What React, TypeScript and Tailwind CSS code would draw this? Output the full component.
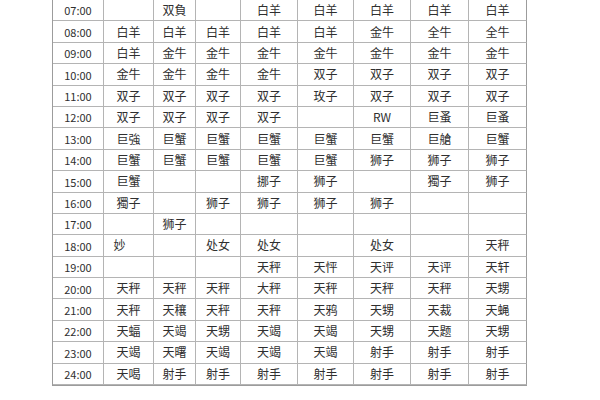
type Row = {
  time: string;
  cells: string[];
};

const rows: Row[] = [
  { time: '07:00', cells: ['', '双負', '', '白羊', '白羊', '白羊', '白羊', '白羊'] },
  { time: '08:00', cells: ['白羊', '白羊', '白羊', '白羊', '白羊', '金牛', '全牛', '全牛'] },
  { time: '09:00', cells: ['白羊', '金牛', '金牛', '金牛', '金牛', '金牛', '金牛', '金牛'] },
  { time: '10:00', cells: ['金牛', '金牛', '金牛', '金牛', '双子', '双子', '双子', '双子'] },
  { time: '11:00', cells: ['双子', '双子', '双子', '双子', '玫子', '双子', '双子', '双子'] },
  { time: '12:00', cells: ['双子', '双子', '双子', '双子', '', 'RW', '巨蚤', '巨蚤'] },
  { time: '13:00', cells: ['巨強', '巨蟹', '巨蟹', '巨蟹', '巨蟹', '巨蟹', '巨艙', '巨蟹'] },
  { time: '14:00', cells: ['巨蟹', '巨蟹', '巨蟹', '巨蟹', '巨蟹', '狮子', '狮子', '狮子'] },
  { time: '15:00', cells: ['巨蟹', '', '', '挪子', '狮子', '', '獨子', '狮子'] },
  { time: '16:00', cells: ['獨子', '', '狮子', '狮子', '狮子', '狮子', '', ''] },
  { time: '17:00', cells: ['', '狮子', '', '', '', '', '', ''] },
  { time: '18:00', cells: ['妙', '', '处女', '处女', '', '处女', '', '天秤'] },
  { time: '19:00', cells: ['', '', '', '天秤', '天怦', '天评', '天评', '天轩'] },
  { time: '20:00', cells: ['天秤', '天秤', '天秤', '大秤', '天秤', '天秤', '天秤', '天甥'] },
  { time: '21:00', cells: ['天秤', '天穰', '天秤', '天秤', '天鸦', '天甥', '天裁', '天蝇'] },
  { time: '22:00', cells: ['天蝠', '天竭', '天甥', '天竭', '天竭', '天甥', '天题', '天甥'] },
  { time: '23:00', cells: ['天竭', '天曙', '天竭', '天竭', '天竭', '射手', '射手', '射手'] },
  { time: '24:00', cells: ['天喝', '射手', '射手', '射手', '射手', '射手', '射手', '射手'] },
];

const App: React.FC = () => {
  return (
    <div className="w-[600px] h-[400px] bg-white overflow-hidden pl-[52px] text-[#2f2f2f] font-['Noto_Sans_CJK_SC','Noto_Sans',sans-serif]">
      <div className="grid w-[475px] grid-cols-[51px_50px_42px_45px_57px_56px_57px_58px_58px] auto-rows-[21.4px] border-l border-b border-[#9c9c9c]">
        {rows.map((row) => (
          <div key={row.time} className="contents">
            <div className="flex items-center justify-center border-r border-b border-[#b4b4b4] text-[11px] pt-px">
              {row.time}
            </div>
            {row.cells.map((cell, i) => (
              <div
                key={i}
                className={
                  'flex items-center justify-center border-b border-[#b4b4b4] text-[12px] leading-none ' +
                  (i === row.cells.length - 1 ? 'border-r border-r-[#9c9c9c]' : 'border-r') +
                  (cell === '妙' ? ' pr-[18px]' : '')
                }
              >
                {cell}
              </div>
            ))}
          </div>
        ))}
      </div>
    </div>
  );
};

export default App;
